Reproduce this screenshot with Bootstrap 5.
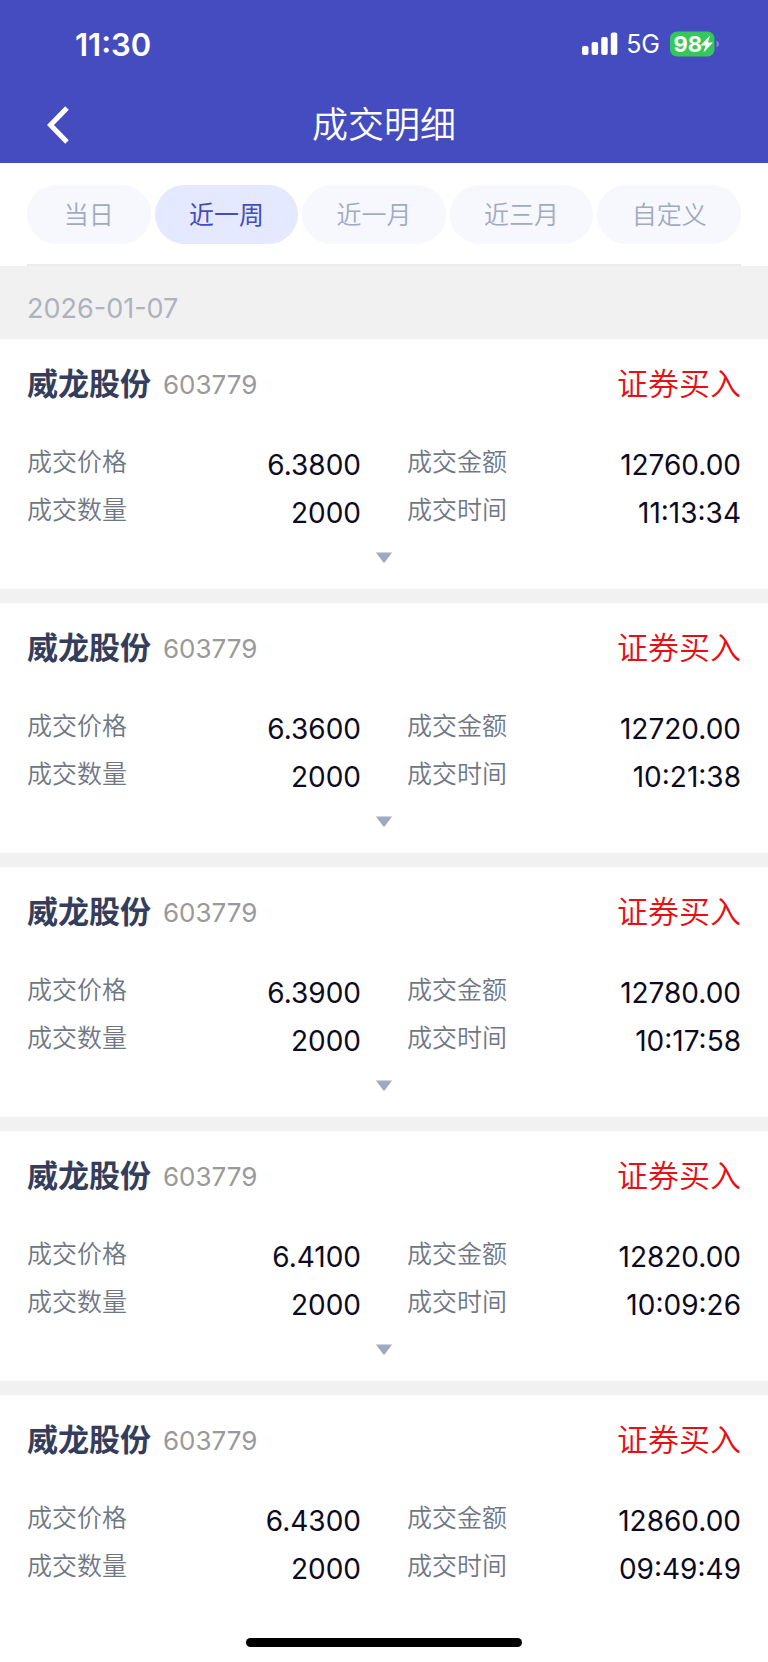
<!DOCTYPE html>
<html lang="zh-CN">
<head>
<meta charset="utf-8">
<meta name="viewport" content="width=device-width, initial-scale=1">
<title>成交明细</title>
<link href="https://cdn.jsdelivr.net/npm/bootstrap@5.3.0/dist/css/bootstrap.min.css" rel="stylesheet">
<style>
  body { font-family: Inter, "Noto Sans CJK SC", sans-serif; background: #fff; color: #0c0a1e; }
  .app-header { background: #444cbf; color: #fff; }
  .status-bar { height: 86px; padding: 2px 48px 0 75px; line-height: 1; }
  .clock { font-size: 31px; font-weight: 600; }
  .net { font-size: 25px; }
  .title-bar { height: 77px; }
  .title-bar h1 { font-size: 36px; font-weight: 350; line-height: 75px; padding-top: 2px; }
  .back-btn { width: 44px; height: 77px; margin-left: 36px; color: #fff; }
  .side { flex: 1 1 0; }
  .gutter { padding-left: 27px; padding-right: 27px; }
  .tabs { padding-top: 22px; padding-bottom: 20px; gap: 4px; border-bottom: 2px solid #ebebeb; }
  .tab-btn { flex: 36 1 0; height: 59px; padding: 2px 0 0; border: 0; border-radius: 30px; background: #f7f8fd; color: #9fabc2; font-size: 25px; font-weight: 350; white-space: nowrap; }
  .tab-btn.short { flex-grow: 31; }
  .tab-btn.active { background: #e5e9ff; color: #444cbf; font-weight: 400; }
  .date-bar { background: #f1f1f1; color: #afb1bf; font-size: 27px; line-height: 61px; padding-top: 12px; }
  .record + .record { border-top: 14px solid #f1f1f1; }
  .record-head { height: 90px; margin-bottom: 12px; gap: 12px; }
  .record-head h2 { font-size: 31px; font-weight: 700; color: #353d5c; }
  .code { font-size: 26px; color: #999; }
  .side-buy { font-size: 31px; font-weight: 350; color: #e60f13; }
  .pairs { gap: 0 46px; display: grid; grid-template-columns: 1fr 1fr; }
  .pairs dt { font-size: 25px; font-weight: 350; line-height: 43px; color: #6f7786; }
  .pairs dd { font-size: 28px; line-height: 48px; }
  .more-btn { height: 52px; padding: 15px 0 0; color: #9fa9bf; }
  .home-area { height: 40px; background: #fff; }
  .home-bar { width: 36%; height: 9px; border-radius: 5px; background: #000; margin-top: 16px; }
</style>
</head>
<body>
<header class="app-header">
  <div class="status-bar d-flex align-items-center justify-content-between">
    <span class="clock">11:30</span>
    <div class="d-flex align-items-center">
      <svg width="36" height="24" viewBox="0 0 36 24" fill="#fff" aria-hidden="true">
        <rect x="0" y="14" width="6.5" height="9" rx="2"/><rect x="9.600" y="10" width="6.500" height="13" rx="2"/><rect x="19.200" y="5" width="6.500" height="18" rx="2"/><rect x="28.800" y="0.500" width="6.500" height="22.500" rx="2"/>
      </svg>
      <span class="net ms-2">5G</span>
      <svg class="ms-2" width="52" height="26" viewBox="0 0 52 26" aria-label="98%">
        <rect x="2" y="0.500" width="44.500" height="25" rx="7" fill="#34c759"/>
        <path d="M48.500 9.500q2.500 1 2.500 3.500t-2.500 3.500z" fill="#8187d4"/>
        <text x="5.500" y="21" font-family="Inter, sans-serif" font-size="22" font-weight="700" fill="#fff">98</text>
        <path d="M42 4.500 32.500 14.500H37.500L35.500 21.500 45 11.500H40z" fill="#fff"/>
      </svg>
    </div>
  </div>
  <div class="title-bar d-flex align-items-center">
    <div class="side"><button type="button" class="btn back-btn border-0 p-0" aria-label="返回">
      <svg width="24" height="40" viewBox="0 0 24 40" fill="none" stroke="currentColor" stroke-width="5"><path d="M21 3 4.500 20 21 37"/></svg>
    </button></div>
    <h1 class="m-0">成交明细</h1>
    <div class="side"></div>
  </div>
</header>

<main>
  <div class="gutter"><nav class="tabs d-flex" aria-label="时间范围">
    <button type="button" class="tab-btn short">当日</button>
    <button type="button" class="tab-btn active" aria-pressed="true">近一周</button>
    <button type="button" class="tab-btn">近一月</button>
    <button type="button" class="tab-btn">近三月</button>
    <button type="button" class="tab-btn">自定义</button>
  </nav></div>
  <div class="date-bar gutter">2026-01-07</div>

  <section class="record gutter">
    <div class="record-head d-flex align-items-center"><h2 class="m-0">威龙股份</h2><span class="code">603779</span><span class="side-buy ms-auto">证券买入</span></div>
    <dl class="pairs m-0">
      <div class="d-flex justify-content-between"><dt>成交价格</dt><dd class="m-0">6.3800</dd></div>
      <div class="d-flex justify-content-between"><dt>成交金额</dt><dd class="m-0">12760.00</dd></div>
      <div class="d-flex justify-content-between"><dt>成交数量</dt><dd class="m-0">2000</dd></div>
      <div class="d-flex justify-content-between"><dt>成交时间</dt><dd class="m-0">11:13:34</dd></div>
    </dl>
    <button type="button" class="more-btn btn border-0 w-100 d-flex justify-content-center" aria-label="展开"><svg width="16" height="11" viewBox="0 0 16 11" fill="currentColor"><path d="M0 0.500h16L9 10q-1 1-2 0z"/></svg></button>
  </section>

  <section class="record gutter">
    <div class="record-head d-flex align-items-center"><h2 class="m-0">威龙股份</h2><span class="code">603779</span><span class="side-buy ms-auto">证券买入</span></div>
    <dl class="pairs m-0">
      <div class="d-flex justify-content-between"><dt>成交价格</dt><dd class="m-0">6.3600</dd></div>
      <div class="d-flex justify-content-between"><dt>成交金额</dt><dd class="m-0">12720.00</dd></div>
      <div class="d-flex justify-content-between"><dt>成交数量</dt><dd class="m-0">2000</dd></div>
      <div class="d-flex justify-content-between"><dt>成交时间</dt><dd class="m-0">10:21:38</dd></div>
    </dl>
    <button type="button" class="more-btn btn border-0 w-100 d-flex justify-content-center" aria-label="展开"><svg width="16" height="11" viewBox="0 0 16 11" fill="currentColor"><path d="M0 0.500h16L9 10q-1 1-2 0z"/></svg></button>
  </section>

  <section class="record gutter">
    <div class="record-head d-flex align-items-center"><h2 class="m-0">威龙股份</h2><span class="code">603779</span><span class="side-buy ms-auto">证券买入</span></div>
    <dl class="pairs m-0">
      <div class="d-flex justify-content-between"><dt>成交价格</dt><dd class="m-0">6.3900</dd></div>
      <div class="d-flex justify-content-between"><dt>成交金额</dt><dd class="m-0">12780.00</dd></div>
      <div class="d-flex justify-content-between"><dt>成交数量</dt><dd class="m-0">2000</dd></div>
      <div class="d-flex justify-content-between"><dt>成交时间</dt><dd class="m-0">10:17:58</dd></div>
    </dl>
    <button type="button" class="more-btn btn border-0 w-100 d-flex justify-content-center" aria-label="展开"><svg width="16" height="11" viewBox="0 0 16 11" fill="currentColor"><path d="M0 0.500h16L9 10q-1 1-2 0z"/></svg></button>
  </section>

  <section class="record gutter">
    <div class="record-head d-flex align-items-center"><h2 class="m-0">威龙股份</h2><span class="code">603779</span><span class="side-buy ms-auto">证券买入</span></div>
    <dl class="pairs m-0">
      <div class="d-flex justify-content-between"><dt>成交价格</dt><dd class="m-0">6.4100</dd></div>
      <div class="d-flex justify-content-between"><dt>成交金额</dt><dd class="m-0">12820.00</dd></div>
      <div class="d-flex justify-content-between"><dt>成交数量</dt><dd class="m-0">2000</dd></div>
      <div class="d-flex justify-content-between"><dt>成交时间</dt><dd class="m-0">10:09:26</dd></div>
    </dl>
    <button type="button" class="more-btn btn border-0 w-100 d-flex justify-content-center" aria-label="展开"><svg width="16" height="11" viewBox="0 0 16 11" fill="currentColor"><path d="M0 0.500h16L9 10q-1 1-2 0z"/></svg></button>
  </section>

  <section class="record gutter pb-4">
    <div class="record-head d-flex align-items-center"><h2 class="m-0">威龙股份</h2><span class="code">603779</span><span class="side-buy ms-auto">证券买入</span></div>
    <dl class="pairs m-0">
      <div class="d-flex justify-content-between"><dt>成交价格</dt><dd class="m-0">6.4300</dd></div>
      <div class="d-flex justify-content-between"><dt>成交金额</dt><dd class="m-0">12860.00</dd></div>
      <div class="d-flex justify-content-between"><dt>成交数量</dt><dd class="m-0">2000</dd></div>
      <div class="d-flex justify-content-between"><dt>成交时间</dt><dd class="m-0">09:49:49</dd></div>
    </dl>
  </section>
</main>

<footer class="home-area fixed-bottom d-flex justify-content-center"><div class="home-bar"></div></footer>
<script src="https://cdn.jsdelivr.net/npm/bootstrap@5.3.0/dist/js/bootstrap.bundle.min.js"></script>
</body>
</html>
